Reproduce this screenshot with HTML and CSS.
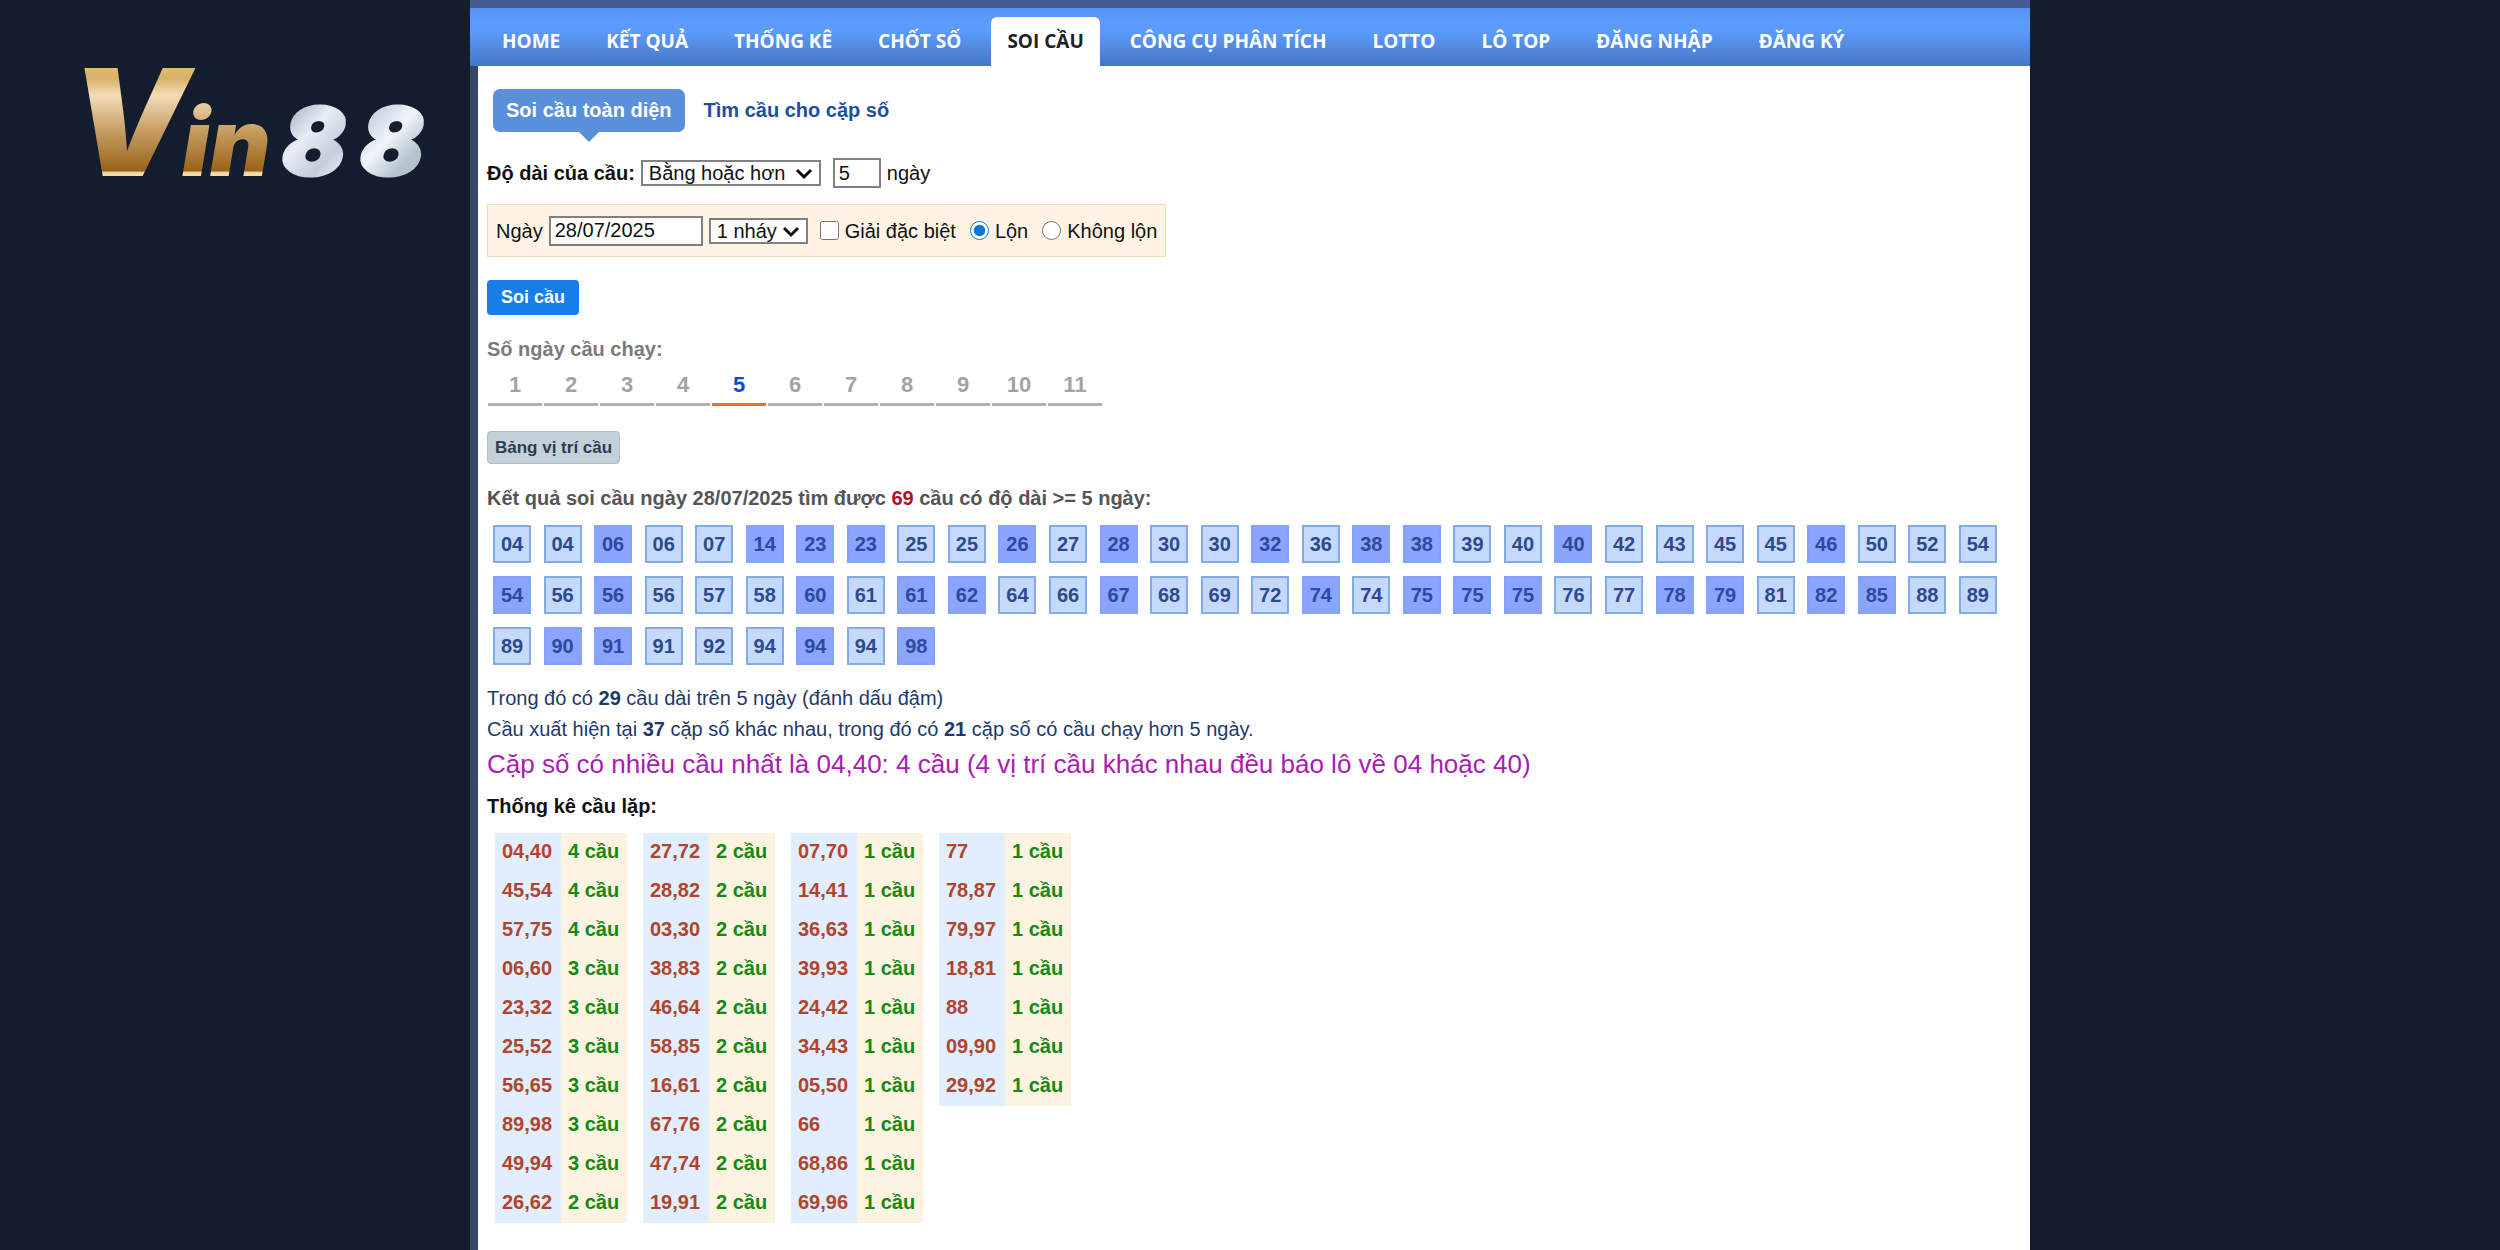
FILE: index.html
```html
<!DOCTYPE html>
<html lang="vi">
<head>
    <meta charset="UTF-8">
    <meta name="viewport" content="width=device-width, initial-scale=1.0">
    <title>Soi cầu - Vin88</title>
    <link rel="stylesheet" href="styles.css">
</head>
<body>

<div class="layout">
    <aside class="side">
        <a href="#" class="logo">
            <svg width="400" height="150" viewBox="-20 -20 400 150" role="img" aria-label="Vin88">
                <defs>
                    <linearGradient id="goldTall" gradientUnits="userSpaceOnUse" x1="0" y1="0" x2="0" y2="108">
                        <stop offset="0" stop-color="#e0bb70"/>
                        <stop offset="0.1" stop-color="#d9b068"/>
                        <stop offset="0.25" stop-color="#f3dcb8"/>
                        <stop offset="0.6" stop-color="#c39a5f"/>
                        <stop offset="0.95" stop-color="#9a6418"/>
                        <stop offset="0.97" stop-color="#f3dcb0"/>
                        <stop offset="1" stop-color="#f3dcb0"/>
                    </linearGradient>
                    <linearGradient id="silver" gradientUnits="userSpaceOnUse" x1="200" y1="46" x2="290" y2="130">
                        <stop offset="0" stop-color="#aab4c2"/>
                        <stop offset="0.25" stop-color="#e8edf5"/>
                        <stop offset="0.5" stop-color="#c3cedb"/>
                        <stop offset="0.75" stop-color="#f1f5fa"/>
                        <stop offset="1" stop-color="#b4c2cc"/>
                    </linearGradient>
                </defs>
                <g class="logo-text">
                    <text class="logo-v" x="-14" y="108">V</text>
                    <text class="logo-in" x="98" y="108">in</text>
                    <text class="logo-num" x="198" y="107">8</text>
                    <text class="logo-num" x="276" y="107">8</text>
                </g>
            </svg>
        </a>
    </aside>

    <div class="panel">
        <nav class="menu">
            <a href="#">HOME</a>
            <a href="#">KẾT QUẢ</a>
            <a href="#">THỐNG KÊ</a>
            <a href="#">CHỐT SỐ</a>
            <a href="#" class="active">SOI CẦU</a>
            <a href="#">CÔNG CỤ PHÂN TÍCH</a>
            <a href="#">LOTTO</a>
            <a href="#">LÔ TOP</a>
            <a href="#">ĐĂNG NHẬP</a>
            <a href="#">ĐĂNG KÝ</a>
        </nav>

        <main class="content">
            <div class="tabs">
                <a href="#" class="active">Soi cầu toàn diện</a>
                <a href="#">Tìm cầu cho cặp số</a>
            </div>

            <form>
                <div class="length-row">
                    <label for="compare" class="strong">Độ dài của cầu:</label>
                    <span class="select-box compare">
                        <select id="compare"><option>Bằng hoặc hơn</option></select>
                        <svg width="18" height="12" viewBox="0 0 18 12"><path d="M2 2l7 7 7-7"/></svg>
                    </span>
                    <input type="text" id="days" class="days-input" value="5">
                    <label for="days">ngày</label>
                </div>

                <div class="filter">
                    <label for="date">Ngày</label>
                    <input type="text" id="date" class="date-input" value="28/07/2025">
                    <span class="select-box hits">
                        <select id="hits" aria-label="Số nháy"><option>1 nháy</option></select>
                        <svg width="18" height="12" viewBox="0 0 18 12"><path d="M2 2l7 7 7-7"/></svg>
                    </span>
                    <label class="option"><input type="checkbox"> Giải đặc biệt</label>
                    <label class="option"><input type="radio" name="flip" checked> Lộn</label>
                    <label class="option"><input type="radio" name="flip"> Không lộn</label>
                </div>

                <button type="submit" class="btn-search">Soi cầu</button>
            </form>

            <p class="days-title">Số ngày cầu chạy:</p>
            <div class="days">
                <a href="#">1</a>
                <a href="#">2</a>
                <a href="#">3</a>
                <a href="#">4</a>
                <a href="#" class="active">5</a>
                <a href="#">6</a>
                <a href="#">7</a>
                <a href="#">8</a>
                <a href="#">9</a>
                <a href="#">10</a>
                <a href="#">11</a>
            </div>

            <button type="button" class="btn-table">Bảng vị trí cầu</button>

            <p class="result-title">Kết quả soi cầu ngày 28/07/2025 tìm được <span class="red">69</span> cầu có độ dài &gt;= 5 ngày:</p>

            <ul class="numbers">
                <li>04</li><li>04</li><li class="hot">06</li><li>06</li><li>07</li>
                <li class="hot">14</li><li class="hot">23</li><li class="hot">23</li><li>25</li><li>25</li>
                <li class="hot">26</li><li>27</li><li class="hot">28</li><li>30</li><li>30</li>
                <li class="hot">32</li><li>36</li><li class="hot">38</li><li class="hot">38</li><li>39</li>
                <li>40</li><li class="hot">40</li><li>42</li><li>43</li><li>45</li>
                <li>45</li><li class="hot">46</li><li>50</li><li>52</li><li>54</li>

                <li class="hot">54</li><li>56</li><li class="hot">56</li><li>56</li><li>57</li>
                <li>58</li><li class="hot">60</li><li>61</li><li class="hot">61</li><li class="hot">62</li>
                <li>64</li><li>66</li><li class="hot">67</li><li>68</li><li>69</li>
                <li>72</li><li class="hot">74</li><li>74</li><li class="hot">75</li><li class="hot">75</li>
                <li class="hot">75</li><li>76</li><li>77</li><li class="hot">78</li><li class="hot">79</li>
                <li>81</li><li class="hot">82</li><li class="hot">85</li><li>88</li><li>89</li>

                <li>89</li><li class="hot">90</li><li class="hot">91</li><li>91</li><li>92</li>
                <li>94</li><li class="hot">94</li><li>94</li><li class="hot">98</li>
            </ul>

            <p class="note">Trong đó có <b>29</b> cầu dài trên 5 ngày (đánh dấu đậm)</p>
            <p class="note">Cầu xuất hiện tại <b>37</b> cặp số khác nhau, trong đó có <b>21</b> cặp số có cầu chạy hơn 5 ngày.</p>
            <p class="best">Cặp số có nhiều cầu nhất là 04,40: 4 cầu (4 vị trí cầu khác nhau đều báo lô về 04 hoặc 40)</p>

            <h2 class="stats-title">Thống kê cầu lặp:</h2>
            <div class="stats">
                <table>
                    <tr><td>04,40</td><td>4 cầu</td></tr>
                    <tr><td>45,54</td><td>4 cầu</td></tr>
                    <tr><td>57,75</td><td>4 cầu</td></tr>
                    <tr><td>06,60</td><td>3 cầu</td></tr>
                    <tr><td>23,32</td><td>3 cầu</td></tr>
                    <tr><td>25,52</td><td>3 cầu</td></tr>
                    <tr><td>56,65</td><td>3 cầu</td></tr>
                    <tr><td>89,98</td><td>3 cầu</td></tr>
                    <tr><td>49,94</td><td>3 cầu</td></tr>
                    <tr><td>26,62</td><td>2 cầu</td></tr>
                </table>
                <table>
                    <tr><td>27,72</td><td>2 cầu</td></tr>
                    <tr><td>28,82</td><td>2 cầu</td></tr>
                    <tr><td>03,30</td><td>2 cầu</td></tr>
                    <tr><td>38,83</td><td>2 cầu</td></tr>
                    <tr><td>46,64</td><td>2 cầu</td></tr>
                    <tr><td>58,85</td><td>2 cầu</td></tr>
                    <tr><td>16,61</td><td>2 cầu</td></tr>
                    <tr><td>67,76</td><td>2 cầu</td></tr>
                    <tr><td>47,74</td><td>2 cầu</td></tr>
                    <tr><td>19,91</td><td>2 cầu</td></tr>
                </table>
                <table>
                    <tr><td>07,70</td><td>1 cầu</td></tr>
                    <tr><td>14,41</td><td>1 cầu</td></tr>
                    <tr><td>36,63</td><td>1 cầu</td></tr>
                    <tr><td>39,93</td><td>1 cầu</td></tr>
                    <tr><td>24,42</td><td>1 cầu</td></tr>
                    <tr><td>34,43</td><td>1 cầu</td></tr>
                    <tr><td>05,50</td><td>1 cầu</td></tr>
                    <tr><td>66</td><td>1 cầu</td></tr>
                    <tr><td>68,86</td><td>1 cầu</td></tr>
                    <tr><td>69,96</td><td>1 cầu</td></tr>
                </table>
                <table>
                    <tr><td>77</td><td>1 cầu</td></tr>
                    <tr><td>78,87</td><td>1 cầu</td></tr>
                    <tr><td>79,97</td><td>1 cầu</td></tr>
                    <tr><td>18,81</td><td>1 cầu</td></tr>
                    <tr><td>88</td><td>1 cầu</td></tr>
                    <tr><td>09,90</td><td>1 cầu</td></tr>
                    <tr><td>29,92</td><td>1 cầu</td></tr>
                </table>
            </div>
        </main>
    </div>
</div>

</body>
</html>
```
FILE: styles.css
```css
* {
    box-sizing: border-box;
}

body {
    margin: 0;
    background: #141d2d;
    font-family: "Liberation Sans", Arial, sans-serif;
    font-size: 20px;
    line-height: 24px;
    color: #111;
}

a {
    text-decoration: none;
}

p,
h2 {
    margin: 0;
}

.layout {
    display: grid;
    grid-template-columns: 470px 1fr 470px;
    min-height: 100vh;
}

/* logo */
.side {
    padding: 48px 0 0 64px;
}

.logo svg {
    display: block;
    overflow: visible;
}

.logo-text {
    font-family: Inter, "DejaVu Sans", sans-serif;
    font-weight: 900;
    font-style: italic;
}

.logo-v {
    font-size: 148px;
    fill: url(#goldTall);
}

.logo-in {
    font-size: 94px;
    fill: url(#goldTall);
}

.logo-num {
    font-size: 94px;
    fill: url(#silver);
    stroke: url(#silver);
    stroke-width: 3px;
}

.panel {
    display: flex;
    flex-direction: column;
    border-top: 8px solid #465a93;
}

/* menu */
.menu {
    display: flex;
    align-items: flex-end;
    gap: 14px;
    height: 58px;
    padding: 0 16px;
    background: linear-gradient(#5592f2, #5b9cff 20%, #5b9bfc 40%, #4677c4);
}

.menu a {
    padding: 0 16px;
    height: 49px;
    line-height: 48px;
    border-radius: 6px 6px 0 0;
    font-family: "Open Sans", "Noto Sans", sans-serif;
    font-size: 19px;
    font-weight: bold;
    color: #fff;
    white-space: nowrap;
}

.menu a.active {
    background: #fff;
    color: #222;
}

.content {
    flex: 1;
    padding: 23px 33px 24px 9px;
    border-left: 8px solid #3a4767;
    background: #fff;
}

/* tabs */
.tabs {
    display: flex;
    gap: 6px;
    padding-left: 6px;
    margin-bottom: 26px;
    font-weight: bold;
}

.tabs a {
    position: relative;
    padding: 0 13px;
    line-height: 43px;
    border-radius: 7px;
    color: #1c4fa3;
}

.tabs a.active {
    background: #5a8fdc;
    color: #fff;
}

.tabs a.active::after {
    content: "";
    position: absolute;
    top: 100%;
    left: 50%;
    margin-left: -10px;
    border: 10px solid transparent;
    border-top-color: #5a8fdc;
    border-bottom: 0;
}

/* form */
input,
select,
button {
    margin: 0;
    font-family: inherit;
    font-size: 20px;
    color: #111;
}

input[type="text"] {
    height: 30px;
    padding: 0 4px;
    border: 2px solid #808080;
    background: #fff;
}

input[type="checkbox"],
input[type="radio"] {
    width: 19px;
    height: 19px;
    accent-color: #0b76d8;
}

.select-box {
    position: relative;
    height: 26px;
}

.select-box select {
    display: block;
    width: 100%;
    height: 26px;
    padding: 0 6px;
    border: 2px solid #808080;
    background: #fff;
    appearance: none;
}

.select-box svg {
    position: absolute;
    top: 8px;
    right: 8px;
    fill: none;
    stroke: #111;
    stroke-width: 3;
    pointer-events: none;
}

.compare {
    width: 180px;
    margin-right: 6px;
}

.hits {
    width: 99px;
    margin-right: 6px;
}

.strong {
    font-weight: bold;
}

.days-input {
    width: 48px;
}

.date-input {
    width: 154px;
}

.length-row {
    display: flex;
    align-items: center;
    gap: 6px;
    margin-bottom: 16px;
}

.filter {
    display: flex;
    align-items: center;
    gap: 6px;
    width: fit-content;
    height: 53px;
    padding: 0 8px;
    margin-bottom: 23px;
    border: 1px solid #f0dcb4;
    background: #fff3e6;
}

.option {
    display: flex;
    align-items: center;
    gap: 6px;
    margin-right: 8px;
}

.option:last-child {
    margin-right: 0;
}

.btn-search {
    display: block;
    height: 35px;
    padding: 0 14px;
    border: 0;
    border-radius: 4px;
    background: #177dea;
    color: #fff;
    font-size: 18px;
    font-weight: bold;
}

/* day picker */
.days-title {
    margin-top: 22px;
    font-weight: bold;
    color: #7a7a7a;
}

.days {
    display: flex;
    gap: 2px;
    padding-left: 1px;
    margin: 12px 0 25px;
}

.days a {
    width: 54px;
    height: 33px;
    border-bottom: 3px solid #b0b0b0;
    text-align: center;
    font-size: 22px;
    font-weight: bold;
    color: #a3a3a3;
}

.days a.active {
    border-color: #e87424;
    color: #0d4cc2;
}

.btn-table {
    display: block;
    height: 33px;
    padding: 0 7px;
    border: 1px solid #aebcc4;
    border-radius: 4px;
    background: #c5d1d9;
    color: #2c3c50;
    font-size: 17px;
    font-weight: bold;
}

/* result */
.result-title {
    margin-top: 22px;
    font-weight: bold;
    color: #555;
}

.red {
    color: #b01030;
}

.numbers {
    display: grid;
    grid-template-columns: repeat(30, 38px);
    justify-content: space-between;
    row-gap: 13px;
    margin: 15px 0 18px;
    padding: 0 0 0 6px;
    list-style: none;
}

.numbers li {
    height: 38px;
    line-height: 34px;
    border: 2px solid #82abe8;
    background: #c4d9fc;
    text-align: center;
    font-weight: bold;
    color: #2d4a8c;
}

.numbers li.hot {
    border-color: #83a3fb;
    background: #8aa4ff;
    color: #2d4a9c;
}

.note {
    line-height: 31px;
    color: #1d3a6b;
}

.best {
    line-height: 38px;
    font-size: 26px;
    color: #a81cb4;
}

.stats-title {
    margin-top: 11px;
    font-size: 20px;
}

.stats {
    display: flex;
    align-items: flex-start;
    gap: 16px;
    padding-left: 8px;
    margin-top: 15px;
}

.stats table {
    border-collapse: collapse;
    font-weight: bold;
}

.stats td {
    width: 66px;
    height: 39px;
    padding: 0 0 4px 7px;
    background: #e1eefd;
    color: #b0442c;
    white-space: nowrap;
}

.stats td:last-child {
    background: #fdf3e1;
    color: #138a13;
}
```
